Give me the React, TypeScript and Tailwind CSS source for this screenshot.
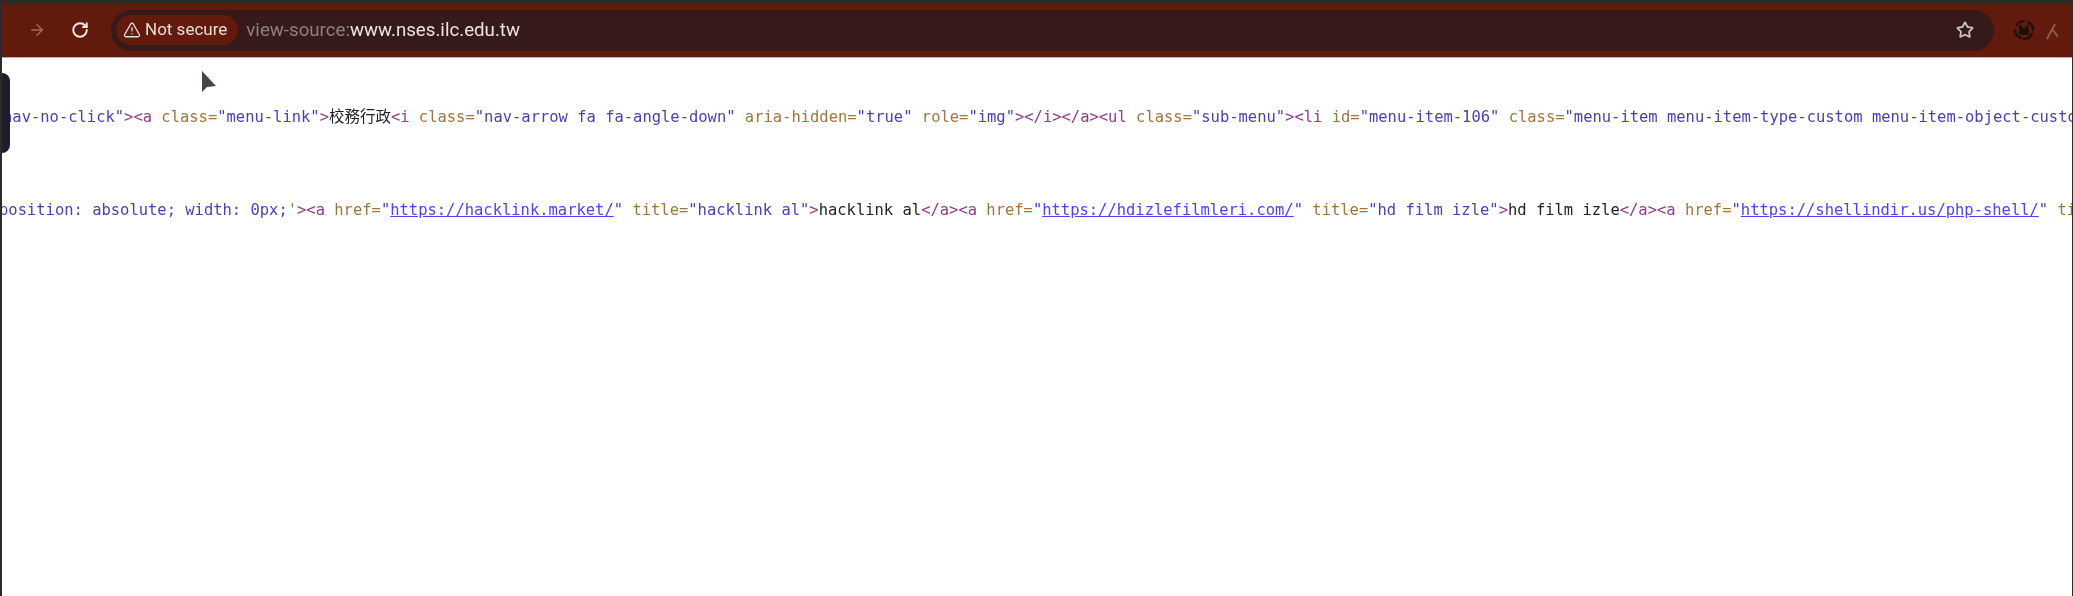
import { ArrowRight, RotateCw, Star, TriangleAlert } from 'lucide-react';

const Tag = ({ children }: { children: string }) => <span className="text-[#8d3f8a]">{children}</span>;
const Attr = ({ children }: { children: string }) => <span className="text-[#9c763f]">{children}</span>;
const Val = ({ children }: { children: string }) => <span className="text-[#4a42ac]">{children}</span>;
const Link = ({ children }: { children: string }) => <span className="text-[#4f43e6] underline">{children}</span>;

export default function App() {
  return (
    <div className="h-[596px] w-[2073px] overflow-hidden bg-white border-l-2 border-r border-[#2b2b2b] relative">
      <div className="h-[3px] bg-[#2b2b2b] -mx-[2px]" />

      {/* Toolbar */}
      <div className="h-[55px] bg-[#621a0d] border-b border-[#c9a8a2] flex items-center">
        <ArrowRight size={18} strokeWidth={2} className="ml-[26px] text-[#a8665c] blur-[0.5px]" />
        <RotateCw size={18} strokeWidth={2.6} className="ml-[25px] text-[#f0e6e3] blur-[0.4px]" />

        <div className="ml-[22px] h-[41px] w-[1883px] rounded-full bg-[#351a19] flex items-center pl-[5px] pr-[20px]">
          <div className="h-[30px] pl-[7px] pr-[11px] rounded-full bg-[#621a0d] flex items-center gap-[4px] text-[#e6dcda] text-[17px] font-['Roboto',sans-serif] blur-[0.6px]">
            <TriangleAlert size={18} strokeWidth={1.8} />
            <span>Not secure</span>
          </div>
          <div className="ml-[8px] text-[18.7px] font-['Roboto',sans-serif] blur-[0.6px]">
            <span className="text-[#8d8180]">view-source:</span>
            <span className="text-[#ece4e2]">www.nses.ilc.edu.tw</span>
          </div>
          <Star size={18} strokeWidth={2.4} className="ml-auto text-[#c9c4c4] blur-[0.5px]" />
        </div>

        <svg width="24" height="24" viewBox="0 0 24 24" fill="none" className="ml-[18px] shrink-0 blur-[0.5px]">
          <path d="M5 7a9 9 0 0 1 7-4M16 4a9 9 0 0 1 5 8M20 16a9 9 0 0 1-8 5M9 20a9 9 0 0 1-6-8" stroke="#1c0f0c" strokeWidth="2.2" strokeLinecap="round" />
          <path d="M8 16V8l4 4 4-4v8z" fill="#1c0f0c" stroke="#1c0f0c" strokeWidth="1.6" />
        </svg>
        <svg width="12" height="22" viewBox="0 0 12 22" fill="none" className="ml-[10px] shrink-0 blur-[0.5px]">
          <path d="M1 20 9 5M6 10l6 8" stroke="#8a5a50" strokeWidth="2" />
        </svg>
      </div>

      {/* Page source */}
      <div className="blur-[0.7px] font-['DejaVu_Sans_Mono','Noto_Sans_CJK_TC',monospace] text-[15.47px] leading-[20px] text-[#222] whitespace-pre">
        <div className="mt-[49px] ml-[1px]">
          <Val>nav-no-click"</Val><Tag>{'><a '}</Tag><Attr>class=</Attr><Val>"menu-link"</Val><Tag>{'>'}</Tag>校務行政<Tag>{'<i '}</Tag><Attr>class=</Attr><Val>"nav-arrow fa fa-angle-down"</Val> <Attr>aria-hidden=</Attr><Val>"true"</Val> <Attr>role=</Attr><Val>"img"</Val><Tag>{'></i></a><ul '}</Tag><Attr>class=</Attr><Val>"sub-menu"</Val><Tag>{'><li '}</Tag><Attr>id=</Attr><Val>"menu-item-106"</Val> <Attr>class=</Attr><Val>"menu-item menu-item-type-custom menu-item-object-custom"</Val>
        </div>
        <div className="mt-[73px] ml-[-3px]">
          <Val>position: absolute; width: 0px;</Val><Attr>'</Attr><Tag>{'><a '}</Tag><Attr>href=</Attr><Val>"</Val><Link>https://hacklink.market/</Link><Val>"</Val> <Attr>title=</Attr><Val>"hacklink al"</Val><Tag>{'>'}</Tag>hacklink al<Tag>{'</a><a '}</Tag><Attr>href=</Attr><Val>"</Val><Link>https://hdizlefilmleri.com/</Link><Val>"</Val> <Attr>title=</Attr><Val>"hd film izle"</Val><Tag>{'>'}</Tag>hd film izle<Tag>{'</a><a '}</Tag><Attr>href=</Attr><Val>"</Val><Link>https://shellindir.us/php-shell/</Link><Val>"</Val> <Attr>title=</Attr>
        </div>
      </div>

      {/* Side tab overlay */}
      <div className="absolute left-[-2px] top-[73px] h-[80px] w-[10px] bg-[#1d1d2b] rounded-r-lg" />

      {/* Mouse pointer */}
      <svg width="18" height="26" viewBox="0 0 18 26" className="absolute left-[198px] top-[69px] blur-[0.6px]">
        <path d="M2 2v21l5-5 9-1z" fill="#4a444a" />
      </svg>
    </div>
  );
}
